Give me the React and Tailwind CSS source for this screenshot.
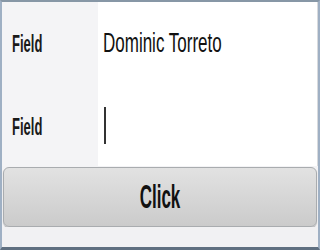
export default function App() {
  return (
    <div className="w-[320px] h-[250px] overflow-hidden bg-[#f3f3f5] border-t-2 border-l-2 border-r-2 border-b-[3px] border-t-[#8797a6] border-l-[#9fb0c4] border-r-[#9fb0c4] border-b-[#5f6f80] flex flex-col" style={{ fontFamily: '"Liberation Sans", Arial, sans-serif' }}>
      <div className="flex h-[82px] border-r border-[#d8dadd]">
        <div className="w-[96px] bg-[#f4f4f6] flex items-center pl-[10px] pt-[4px] text-[13px] font-bold text-[#1a1a1a]">
          <span className="inline-block scale-y-[1.8]">Field</span>
        </div>
        <div className="flex-1 bg-white flex items-center pl-[5px] pt-[2px] text-[17px] text-[#111]">
          <span className="inline-block scale-y-[1.65]">Dominic Torreto</span>
        </div>
      </div>
      <div className="flex h-[82px] border-r border-[#d8dadd]">
        <div className="w-[96px] bg-[#f4f4f6] flex items-center pl-[10px] pt-[6px] text-[13px] font-bold text-[#1a1a1a]">
          <span className="inline-block scale-y-[1.8]">Field</span>
        </div>
        <div className="flex-1 bg-white flex items-center pl-[6px] pt-[1px]">
          <div className="w-[1.5px] h-[37px] bg-[#333]"></div>
        </div>
      </div>
      <button className="h-[60px] mt-[1px] mx-[1px] pt-[2px] rounded-[6px] border border-[#a9acaf] bg-gradient-to-b from-[#e2e2e2] to-[#cbcbcb] shadow-[0_1px_1px_rgba(0,0,0,0.25)] text-[17px] font-bold text-[#111] flex items-center justify-center">
        <span className="inline-block scale-y-[1.9]">Click</span>
      </button>
      <div className="flex-1 bg-[#f1f1f3]"></div>
    </div>
  );
}
